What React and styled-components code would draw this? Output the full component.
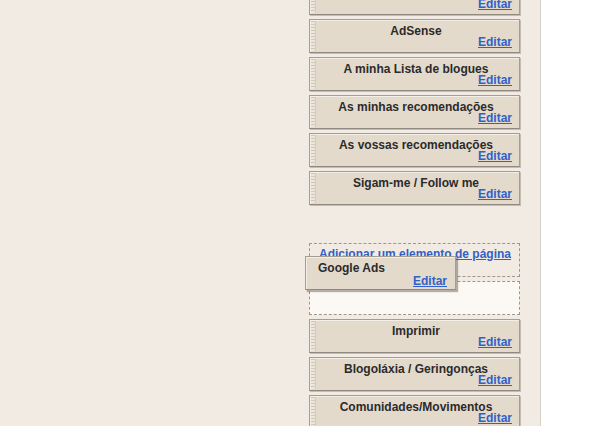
import React from 'react';
import styled, { createGlobalStyle } from 'styled-components';

const GlobalStyle = createGlobalStyle`
  html, body {
    margin: 0;
    padding: 0;
    height: 100%;
    overflow: hidden;
  }
  body {
    background: #f1ebe3;
    font-family: "Liberation Sans", Arial, sans-serif;
  }
`;

const Page = styled.div`
  display: flex;
  height: 426px;
  overflow: hidden;
`;

const Main = styled.div`
  width: 309px;
  flex-shrink: 0;
`;

const Sidebar = styled.div`
  position: relative;
  width: 211px;
  flex-shrink: 0;
  margin-top: -19px;
`;

const Gutter = styled.div`
  width: 20px;
  flex-shrink: 0;
  border-right: 1px solid #d6d0c6;
`;

const Outside = styled.div`
  flex: 1;
  background: #ffffff;
`;

const Widget = styled.div`
  position: relative;
  box-sizing: border-box;
  height: 34px;
  margin-bottom: 4px;
  padding: 5px 7px 2px 10px;
  background: #e3dacc;
  border: 1px solid #a39d92;
  border-bottom-color: #8f897f;
  box-shadow: inset 1px 1px 0 #f3eee6, 1px 1px 0 #c4bdb2;

  &::before {
    content: '';
    position: absolute;
    left: 1px;
    top: 1px;
    bottom: 1px;
    width: 4px;
    border-right: 1px solid #d3cbbe;
    background: repeating-linear-gradient(
      to bottom,
      #cfc7ba 0px,
      #cfc7ba 1px,
      #ebe5db 1px,
      #ebe5db 3px
    );
  }
`;

const Title = styled.div`
  font-weight: bold;
  font-size: 12px;
  line-height: 13px;
  color: #2b2b2b;
  text-align: ${(p) => (p.$left ? 'left' : 'center')};
  white-space: nowrap;
`;

const Edit = styled.a`
  display: block;
  margin-top: -2px;
  text-align: right;
  font-weight: bold;
  font-size: 12px;
  line-height: 13px;
  color: #3161c9;
  text-decoration: underline;
  cursor: pointer;
`;

const Spacer = styled.div`
  height: 34px;
`;

const DropZone = styled.div`
  box-sizing: border-box;
  height: 34px;
  margin-bottom: 4px;
  border: 1px dashed #9d978d;
  padding: 0 9px;
  background: ${(p) => (p.$light ? '#fcf8f3' : 'transparent')};
`;

const AddLink = styled.a`
  font-weight: bold;
  font-size: 12px;
  line-height: 14px;
  color: #3161c9;
  text-decoration: underline;
  white-space: nowrap;
`;

const Dragged = styled(Widget)`
  position: absolute;
  left: -4px;
  top: 275px;
  width: 151px;
  padding: 5px 8px 2px 12px;
  box-shadow: inset 1px 1px 0 #f3eee6, 2px 2px 1px rgba(90, 85, 78, 0.45);
  z-index: 2;

  &::before {
    display: none;
  }

  ${Edit} {
    margin-top: 0;
  }
`;

const topWidgets = [
  '',
  'AdSense',
  'A minha Lista de blogues',
  'As minhas recomendações',
  'As vossas recomendações',
  'Sigam-me / Follow me',
];

const bottomWidgets = ['Imprimir', 'Blogoláxia / Geringonças', 'Comunidades/Movimentos'];

const Gadget = ({ title }) => (
  <Widget>
    <Title>{title || '\u00a0'}</Title>
    <Edit>Editar</Edit>
  </Widget>
);

export default function App() {
  return (
    <>
      <GlobalStyle />
      <Page>
        <Main />
        <Sidebar>
          {topWidgets.map((t, i) => (
            <Gadget key={i} title={t} />
          ))}
          <Spacer />
          <DropZone>
            <AddLink>Adicionar um elemento de página</AddLink>
          </DropZone>
          <DropZone $light />
          {bottomWidgets.map((t) => (
            <Gadget key={t} title={t} />
          ))}
          <Dragged>
            <Title $left>Google Ads</Title>
            <Edit>Editar</Edit>
          </Dragged>
        </Sidebar>
        <Gutter />
        <Outside />
      </Page>
    </>
  );
}
